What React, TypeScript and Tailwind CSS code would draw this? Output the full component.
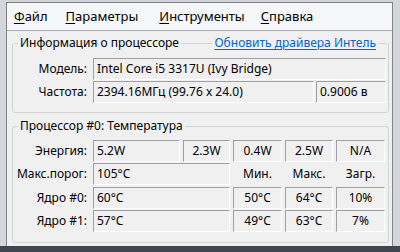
import React from "react";

const font = { fontFamily: '"Noto Sans", "Open Sans", sans-serif' };

function Field({ children, className = "" }: { children?: React.ReactNode; className?: string }) {
  return (
    <div
      className={
        "h-[22px] flex items-center border-t border-l border-t-[#a0a0a0] border-l-[#a0a0a0] border-b border-r border-b-white border-r-white whitespace-nowrap overflow-hidden " +
        className
      }
    >
      {children}
    </div>
  );
}

function Label({ children }: { children: React.ReactNode }) {
  return <div className="w-[74px] mr-[6px] text-right whitespace-nowrap">{children}</div>;
}

function U({ children }: { children: React.ReactNode }) {
  return <span className="underline underline-offset-2">{children}</span>;
}

export default function App() {
  return (
    <div
      className="w-[400px] h-[252px] bg-[#d3d6da] flex flex-col text-[12px] text-black leading-none"
      style={font}
    >
      <div className="flex-1 flex flex-col pl-[6px] pr-[7px] pt-[2px]">
        <div className="h-[244px] bg-[#f0f0f0] border border-[#7f8389] border-b-0 flex flex-col">
          {/* Menu */}
          <div className="h-[28px] flex items-center text-[13px] border-b border-[#a7abb0] pl-[6px] bg-[#f5f6f7]">
            <span className="ml-[1px]"><U>Ф</U>айл</span>
            <span className="ml-[18px]"><U>П</U>араметры</span>
            <span className="ml-[21px]"><U>И</U>нструменты</span>
            <span className="ml-[16px]"><U>С</U>правка</span>
          </div>

          {/* Group 1 */}
          <div className="mt-[12px] ml-[5px] mr-[3px] border border-[#d5d5d5] rounded-[3px] h-[70px] flex flex-col pr-[2px]">
            <div className="-mt-[9px] h-[16px] flex items-center ml-[5px]">
              <span className="bg-[#f0f0f0] px-[2px]">Информация о процессоре</span>
              <span className="ml-auto mr-[8px] bg-[#f0f0f0] px-[2px] text-[#0066cc] underline underline-offset-2">
                Обновить драйвера Интель
              </span>
            </div>
            <div className="mt-[7px] flex items-center">
              <Label>Модель:</Label>
              <Field className="flex-1 pl-[3px]">Intel Core i5 3317U (Ivy Bridge)</Field>
            </div>
            <div className="mt-[1px] flex items-center">
              <Label>Частота:</Label>
              <Field className="flex-1 pl-[3px]">2394.16МГц (99.76 x 24.0)</Field>
              <Field className="w-[70px] ml-[2px] pl-[3px]">0.9006 в</Field>
            </div>
          </div>

          {/* Group 2 */}
          <div className="mt-[13px] ml-[5px] mr-[3px] border border-[#d5d5d5] rounded-[3px] h-[117px] flex flex-col">
            <div className="-mt-[9px] h-[16px] flex items-center ml-[5px]">
              <span className="bg-[#f0f0f0] px-[2px]">Процессор #0: Температура</span>
            </div>
            <div className="mt-[6px] flex items-center">
              <Label>Энергия:</Label>
              <Field className="w-[87px] pl-[3px]">5.2W</Field>
              <Field className="w-[47px] ml-[3px] justify-center">2.3W</Field>
              <Field className="w-[49px] ml-[3px] justify-center">0.4W</Field>
              <Field className="w-[48px] ml-[3px] justify-center">2.5W</Field>
              <Field className="w-[49px] ml-[3px] justify-center">N/A</Field>
            </div>
            <div className="mt-[1px] flex items-center">
              <Label>Макс.порог:</Label>
              <Field className="w-[137px] pl-[3px]">105°C</Field>
              <div className="w-[49px] ml-[3px] text-center">Мин.</div>
              <div className="w-[48px] ml-[3px] text-center">Макс.</div>
              <div className="w-[49px] ml-[3px] text-center">Загр.</div>
            </div>
            <div className="mt-[2px] flex items-center">
              <Label>Ядро #0:</Label>
              <Field className="w-[137px] pl-[3px]">60°C</Field>
              <Field className="w-[49px] ml-[3px] justify-center">50°C</Field>
              <Field className="w-[48px] ml-[3px] justify-center">64°C</Field>
              <Field className="w-[49px] ml-[3px] justify-center">10%</Field>
            </div>
            <div className="mt-[1px] flex items-center">
              <Label>Ядро #1:</Label>
              <Field className="w-[137px] pl-[3px]">57°C</Field>
              <Field className="w-[49px] ml-[3px] justify-center">49°C</Field>
              <Field className="w-[48px] ml-[3px] justify-center">63°C</Field>
              <Field className="w-[49px] ml-[3px] justify-center">7%</Field>
            </div>
          </div>
        </div>
      </div>
      <div className="h-[6px] bg-[#3e4652]" />
    </div>
  );
}
